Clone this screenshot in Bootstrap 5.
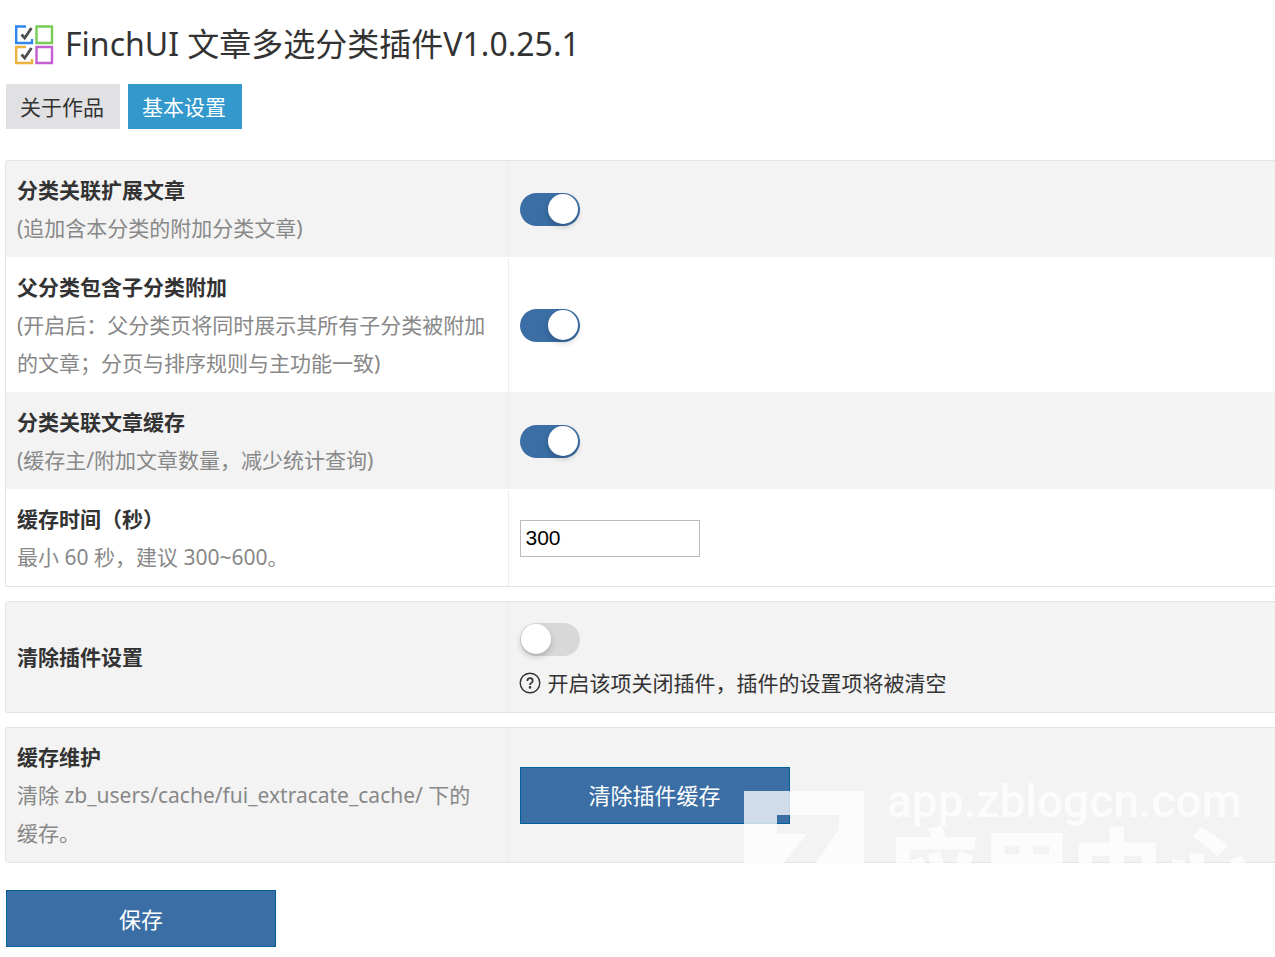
<!DOCTYPE html>
<html lang="zh-CN">
<head>
<meta charset="utf-8">
<meta name="viewport" content="width=device-width, initial-scale=1">
<title>FinchUI 文章多选分类插件</title>
<link href="https://cdn.jsdelivr.net/npm/bootstrap@5.3.0/dist/css/bootstrap.min.css" rel="stylesheet">
<style>
body { font-family: "Noto Sans", "Noto Sans CJK SC", sans-serif; font-size: 21px; line-height: 38px; color: #333; background: #fff; overflow-x: hidden; }
.page { padding: 20px 0 10px 5px; }
.page-title { font-size: 32px; line-height: 48px; }
.tab-link { padding: 4px 15px 3px 14px; margin-left: 1px; margin-right: 7px; border-right: 1px solid transparent; background: #e1e1e3; color: #333; text-decoration: none; }
.tab-link.active { background: #3399cc; color: #fff; }
.panels { gap: 14px; margin-top: 31px; }
.panel { border: 1px solid #e4e4e4; border-right: 0; border-radius: 3px 0 0 3px; }
.setting + .setting { border-top: 1px solid transparent; }
.setting:nth-child(odd) { background: #f3f3f3; }
.setting-name { flex: 0 0 39.6%; padding: 10px 18px 10px 11px; border-right: 1px solid #eee; }
.setting-value { padding: 10px 11px; }
.setting-title { display: block; font-weight: 700; }
.note { color: #888; }
.form-check-input.toggle { display: block; width: 60px; height: 33px; margin: 0; padding: 1px; border: 0; border-radius: 17px; background: #d8d8d8; cursor: pointer; }
.toggle::before { content: ""; display: block; width: 30px; height: 30px; border-radius: 50%; background: #fff; box-shadow: 0 3px 6px rgba(0,0,0,.2); }
.form-check-input.toggle:checked { background: #3a6ea5; }
.toggle:checked::before { margin-left: 27px; }
.form-check-input.toggle-stacked { margin: 11px 0 8px; }
.seconds { width: 180px; height: 37px; padding: 0 5px; border: 1px solid #bbb; border-radius: 0; color: #000; font-family: "Liberation Sans", sans-serif; font-size: 21px; }
.action { width: 270px; height: 57px; border: 1px solid #00609a; border-radius: 0; background: #3a6ea5; color: #fff; font-size: 22px; line-height: 38px; }
.action:hover { background: #32608f; color: #fff; }
.save { margin: 27px 0 0 1px; }
.watermark { right: 0; bottom: -1px; width: 531px; height: 84px; overflow: hidden; color: #fff; opacity: .76; pointer-events: none; }
.watermark-logo { margin-top: 12px; }
.watermark-text { margin-left: 23px; white-space: nowrap; }
.watermark-host { font-family: Roboto, sans-serif; font-weight: 500; font-size: 46px; line-height: 45px; }
.watermark-name { font-family: "Noto Sans CJK SC", sans-serif; font-weight: 900; font-size: 92px; line-height: 84px; }
</style>
</head>
<body>
<main class="page">
  <h1 class="page-title d-flex align-items-center mb-0 fw-normal">
    <svg class="ms-2 me-2" width="44" height="44" viewBox="0 0 44 44" fill="none" stroke-width="2.4" aria-hidden="true">
      <path d="M13 4.500H3.200V21H19V17" stroke="#2f86ee"/>
      <path d="M23.500 4.500H39V21H23.500Z" stroke="#76cc55"/>
      <path d="M13 25H3.200V41H19V37" stroke="#ebb23e"/>
      <path d="M23.500 25H39V41H23.500Z" stroke="#c45fd2"/>
      <path d="M8.500 12.500l3.200 3.500L18.500 6M8.500 32.500l3.200 3.500L18.500 26" stroke="#505050" stroke-width="2.8"/>
    </svg>
    <span>FinchUI 文章多选分类插件V1.0.25.1</span>
  </h1>
  <nav class="d-flex mt-3" aria-label="插件页面">
    <a class="tab-link" href="#about">关于作品</a>
    <a class="tab-link active" href="#settings" aria-current="page">基本设置</a>
  </nav>
  <form id="settings" onsubmit="return false">
    <div class="panels d-flex flex-column">
      <section class="panel">
        <div class="setting d-flex">
          <div class="setting-name"><label class="setting-title" for="extend">分类关联扩展文章</label><span class="note">(追加含本分类的附加分类文章)</span></div>
          <div class="setting-value d-flex align-items-center"><input class="form-check-input toggle" type="checkbox" role="switch" id="extend" checked></div>
        </div>
        <div class="setting d-flex">
          <div class="setting-name"><label class="setting-title" for="children">父分类包含子分类附加</label><span class="note">(开启后：父分类页将同时展示其所有子分类被附加的文章；分页与排序规则与主功能一致)</span></div>
          <div class="setting-value d-flex align-items-center"><input class="form-check-input toggle" type="checkbox" role="switch" id="children" checked></div>
        </div>
        <div class="setting d-flex">
          <div class="setting-name"><label class="setting-title" for="cache">分类关联文章缓存</label><span class="note">(缓存主/附加文章数量，减少统计查询)</span></div>
          <div class="setting-value d-flex align-items-center"><input class="form-check-input toggle" type="checkbox" role="switch" id="cache" checked></div>
        </div>
        <div class="setting d-flex">
          <div class="setting-name"><label class="setting-title" for="seconds">缓存时间（秒）</label><span class="note">最小 60 秒，建议 300~600。</span></div>
          <div class="setting-value d-flex align-items-center"><input class="seconds" type="text" inputmode="numeric" id="seconds" value="300"></div>
        </div>
      </section>
      <section class="panel">
        <div class="setting d-flex">
          <div class="setting-name d-flex align-items-center"><label class="setting-title" for="reset">清除插件设置</label></div>
          <div class="setting-value">
            <input class="form-check-input toggle toggle-stacked" type="checkbox" role="switch" id="reset">
            <div class="d-flex align-items-center gap-2">
              <svg width="20" height="20" viewBox="0 0 20 20" fill="none" stroke="#333" stroke-width="1.4" overflow="visible" aria-hidden="true"><circle cx="10" cy="10" r="9.800"/><path d="M7.300 8Q7.300 5.200 10 5.200T12.700 7.700Q12.700 9.200 11.200 10Q10 10.700 10 12" stroke-width="1.700"/><circle cx="10" cy="14.400" r=".6" fill="#333"/></svg>
              <span>开启该项关闭插件，插件的设置项将被清空</span>
            </div>
          </div>
        </div>
      </section>
      <section class="panel position-relative">
        <div class="setting d-flex">
          <div class="setting-name"><span class="setting-title">缓存维护</span><span class="note">清除 zb_users/cache/fui_extracate_cache/ 下的缓存。</span></div>
          <div class="setting-value d-flex align-items-center"><button class="btn action" type="button">清除插件缓存</button></div>
        </div>
        <div class="watermark position-absolute d-flex">
          <svg class="watermark-logo flex-shrink-0" width="120" height="120" viewBox="0 0 120 120" aria-hidden="true"><path fill="#fff" fill-rule="evenodd" d="M0 0H120V120H0ZM33 24V43H63L33 80V96H95V76H69L95 38V24Z"/></svg>
          <div class="watermark-text"><div class="watermark-host">app.zblogcn.com</div><div class="watermark-name">应用中心</div></div>
        </div>
      </section>
    </div>
    <button class="btn action save" type="submit">保存</button>
  </form>
</main>
<script src="https://cdn.jsdelivr.net/npm/bootstrap@5.3.0/dist/js/bootstrap.bundle.min.js"></script>
</body>
</html>
